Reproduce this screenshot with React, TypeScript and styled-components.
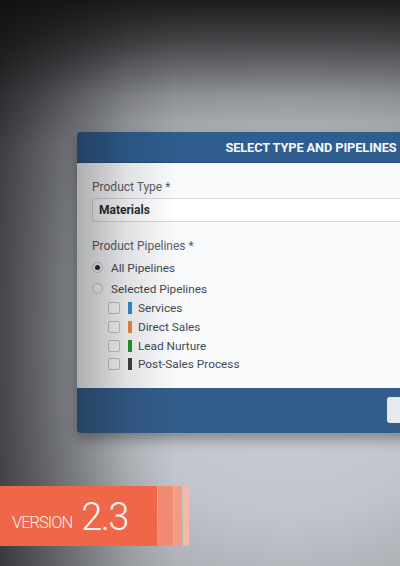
import styled, { createGlobalStyle } from "styled-components";

const GlobalStyle = createGlobalStyle`
  html, body {
    margin: 0;
    padding: 0;
  }
  body {
    font-family: Roboto, "Liberation Sans", sans-serif;
  }
`;

interface IPipeline {
  name: string;
  color: string;
}

const pipelines: IPipeline[] = [
  { name: "Services", color: "#2f8fd0" },
  { name: "Direct Sales", color: "#ee8a3c" },
  { name: "Lead Nurture", color: "#1f9a2f" },
  { name: "Post-Sales Process", color: "#3f4140" },
];

const Page = styled.div`
  position: relative;
  width: 400px;
  height: 566px;
  overflow: hidden;
  padding-top: 132px;
  box-sizing: border-box;
  background:
    linear-gradient(180deg, #1d1d1e 0%, rgba(29, 29, 30, 0.7) 7%, rgba(29, 29, 30, 0.2) 17%, rgba(29, 29, 30, 0) 26%),
    radial-gradient(ellipse 110% 75% at 72% 60%, #cfd3d9 0%, #c1c5cb 42%, #9c9fa4 74%, #5c5e62 100%);
`;

const Shade = styled.div`
  position: absolute;
  inset: 0;
  z-index: 1;
  pointer-events: none;
  background: linear-gradient(
    90deg,
    rgba(10, 10, 12, 0.62) 0%,
    rgba(10, 10, 12, 0.32) 19%,
    rgba(10, 10, 12, 0.1) 32%,
    rgba(10, 10, 12, 0) 44%
  );
`;

const ModalWrap = styled.div`
  padding-left: 77px;
`;

const Modal = styled.div`
  width: 468px;
  border-radius: 4px;
  overflow: hidden;
  box-shadow: 0 6px 14px rgba(0, 0, 0, 0.35);
`;

const Header = styled.div`
  height: 30px;
  background: #2e5d8e;
  border-bottom: 1px solid #284f78;
  display: flex;
  align-items: center;
  justify-content: center;
  color: #f4f6f9;
  font-size: 12.8px;
  font-weight: 700;
  letter-spacing: -0.1px;
`;

const Body = styled.div`
  background: #f9fafb;
  padding: 17px 0 14px 15px;
  display: flex;
  flex-direction: column;
`;

const Label = styled.div`
  color: #5b6169;
  font-size: 12px;
  line-height: 14px;
  margin-bottom: 4px;
`;

const Input = styled.div`
  height: 24px;
  box-sizing: border-box;
  border: 1px solid #d6dbe1;
  border-right: none;
  border-radius: 3px 0 0 3px;
  background: #ffffff;
  display: flex;
  align-items: center;
  padding-left: 6px;
  color: #27303b;
  font-size: 12px;
  font-weight: 700;
  margin-bottom: 17px;
`;

const RadioRow = styled.div`
  height: 21px;
  display: flex;
  align-items: center;
  gap: 8px;
  color: #424a55;
  font-size: 11.8px;
`;

const Radio = styled.span<{ checked?: boolean }>`
  width: 11px;
  height: 11px;
  box-sizing: border-box;
  border-radius: 50%;
  border: 1px solid #c3c9d0;
  background: #fff;
  display: flex;
  align-items: center;
  justify-content: center;
  &::after {
    content: "";
    width: 5px;
    height: 5px;
    border-radius: 50%;
    background: ${({ checked }) => (checked ? "#1c2633" : "transparent")};
  }
`;

const CheckList = styled.div`
  display: flex;
  flex-direction: column;
  padding-left: 16px;
`;

const CheckRow = styled.div`
  height: 18.7px;
  display: flex;
  align-items: center;
  color: #424a55;
  font-size: 11.8px;
`;

const Checkbox = styled.span`
  width: 12px;
  height: 12px;
  box-sizing: border-box;
  border: 1px solid #c4c9cf;
  border-radius: 2px;
  background: #fdfdfd;
  margin-right: 8px;
`;

const ColorBar = styled.span<{ color: string }>`
  width: 4px;
  height: 12px;
  background: ${({ color }) => color};
  margin-right: 6px;
`;

const Footer = styled.div`
  height: 45px;
  background: #335d8b;
  display: flex;
  align-items: center;
  padding-left: 310px;
`;

const FooterButton = styled.div`
  width: 80px;
  height: 26px;
  border-radius: 3px;
  background: #e6e9ee;
`;

const Badge = styled.div`
  position: relative;
  z-index: 2;
  margin-top: 53px;
  display: flex;
  height: 60px;
`;

const BadgeMain = styled.div`
  width: 157px;
  background: #ef6648;
  display: flex;
  align-items: flex-end;
  padding: 0 0 14px 12px;
  box-sizing: border-box;
  color: #fbeae4;
`;

const VersionWord = styled.span`
  font-size: 16.5px;
  font-weight: 300;
  letter-spacing: -1px;
  line-height: 17px;
  margin-right: 9px;
  margin-bottom: 1px;
`;

const VersionNumber = styled.span`
  font-size: 38px;
  font-weight: 300;
  letter-spacing: -1.5px;
  line-height: 30px;
  color: #fdf5f2;
`;

const Stripe = styled.div<{ w: number; color: string; gap?: number }>`
  width: ${({ w }) => w}px;
  margin-left: ${({ gap }) => gap ?? 0}px;
  background: ${({ color }) => color};
`;

export default function App() {
  return (
    <Page>
      <GlobalStyle />
      <Shade />
      <ModalWrap>
        <Modal>
          <Header>SELECT TYPE AND PIPELINES</Header>
          <Body>
            <Label>Product Type *</Label>
            <Input>Materials</Input>
            <Label>Product Pipelines *</Label>
            <RadioRow>
              <Radio checked />
              All Pipelines
            </RadioRow>
            <RadioRow>
              <Radio />
              Selected Pipelines
            </RadioRow>
            <CheckList>
              {pipelines.map((p) => (
                <CheckRow key={p.name}>
                  <Checkbox />
                  <ColorBar color={p.color} />
                  {p.name}
                </CheckRow>
              ))}
            </CheckList>
          </Body>
          <Footer>
            <FooterButton />
          </Footer>
        </Modal>
      </ModalWrap>
      <Badge>
        <BadgeMain>
          <VersionWord>VERSION</VersionWord>
          <VersionNumber>2.3</VersionNumber>
        </BadgeMain>
        <Stripe w={15} color="#f08a70" gap={1} />
        <Stripe w={8} color="#f29c86" gap={1} />
        <Stripe w={6} color="#f6b9a9" gap={1} />
      </Badge>
    </Page>
  );
}
